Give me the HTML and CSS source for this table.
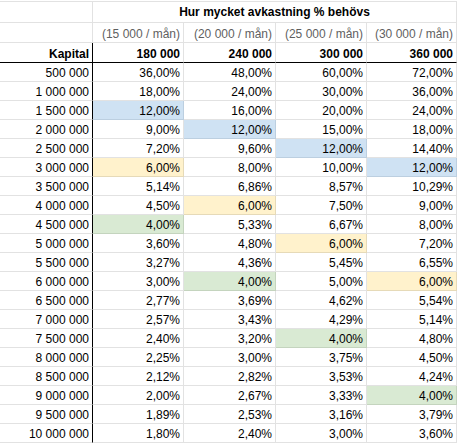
FILE: index.html
```html
<!DOCTYPE html>
<html lang="sv">
<head>
<meta charset="utf-8">
<link rel="stylesheet" href="styles.css">
</head>
<body>
<div class="sheet">
  <div class="c r1 key"></div>
  <div class="c r1 title">Hur mycket avkastning % behövs</div>

  <div class="c r2 key"></div>
  <div class="c r2 sub">(15 000 / mån)</div>
  <div class="c r2 sub">(20 000 / mån)</div>
  <div class="c r2 sub">(25 000 / mån)</div>
  <div class="c r2 sub">(30 000 / mån)</div>

  <div class="c r3 key bold">Kapital</div>
  <div class="c r3 bold">180 000</div>
  <div class="c r3 bold">240 000</div>
  <div class="c r3 bold">300 000</div>
  <div class="c r3 bold">360 000</div>

  <div class="c key">500 000</div><div class="c">36,00%</div><div class="c">48,00%</div><div class="c">60,00%</div><div class="c">72,00%</div>
  <div class="c key">1 000 000</div><div class="c">18,00%</div><div class="c">24,00%</div><div class="c">30,00%</div><div class="c">36,00%</div>
  <div class="c key">1 500 000</div><div class="c blue">12,00%</div><div class="c">16,00%</div><div class="c">20,00%</div><div class="c">24,00%</div>
  <div class="c key">2 000 000</div><div class="c">9,00%</div><div class="c blue">12,00%</div><div class="c">15,00%</div><div class="c">18,00%</div>
  <div class="c key">2 500 000</div><div class="c">7,20%</div><div class="c">9,60%</div><div class="c blue">12,00%</div><div class="c">14,40%</div>
  <div class="c key">3 000 000</div><div class="c yellow">6,00%</div><div class="c">8,00%</div><div class="c">10,00%</div><div class="c blue">12,00%</div>
  <div class="c key">3 500 000</div><div class="c">5,14%</div><div class="c">6,86%</div><div class="c">8,57%</div><div class="c">10,29%</div>
  <div class="c key">4 000 000</div><div class="c">4,50%</div><div class="c yellow">6,00%</div><div class="c">7,50%</div><div class="c">9,00%</div>
  <div class="c key">4 500 000</div><div class="c green">4,00%</div><div class="c">5,33%</div><div class="c">6,67%</div><div class="c">8,00%</div>
  <div class="c key">5 000 000</div><div class="c">3,60%</div><div class="c">4,80%</div><div class="c yellow">6,00%</div><div class="c">7,20%</div>
  <div class="c key">5 500 000</div><div class="c">3,27%</div><div class="c">4,36%</div><div class="c">5,45%</div><div class="c">6,55%</div>
  <div class="c key">6 000 000</div><div class="c">3,00%</div><div class="c green">4,00%</div><div class="c">5,00%</div><div class="c yellow">6,00%</div>
  <div class="c key">6 500 000</div><div class="c">2,77%</div><div class="c">3,69%</div><div class="c">4,62%</div><div class="c">5,54%</div>
  <div class="c key">7 000 000</div><div class="c">2,57%</div><div class="c">3,43%</div><div class="c">4,29%</div><div class="c">5,14%</div>
  <div class="c key">7 500 000</div><div class="c">2,40%</div><div class="c">3,20%</div><div class="c green">4,00%</div><div class="c">4,80%</div>
  <div class="c key">8 000 000</div><div class="c">2,25%</div><div class="c">3,00%</div><div class="c">3,75%</div><div class="c">4,50%</div>
  <div class="c key">8 500 000</div><div class="c">2,12%</div><div class="c">2,82%</div><div class="c">3,53%</div><div class="c">4,24%</div>
  <div class="c key">9 000 000</div><div class="c">2,00%</div><div class="c">2,67%</div><div class="c">3,33%</div><div class="c green">4,00%</div>
  <div class="c key">9 500 000</div><div class="c">1,89%</div><div class="c">2,53%</div><div class="c">3,16%</div><div class="c">3,79%</div>
  <div class="c key">10 000 000</div><div class="c">1,80%</div><div class="c">2,40%</div><div class="c">3,00%</div><div class="c">3,60%</div>
</div>
</body>
</html>
```
FILE: styles.css
```css
html, body {
  margin: 0;
  padding: 0;
  background: #fff;
}

.sheet {
  margin-top: 1px;
  display: grid;
  grid-template-columns: 93px 91px 92px 91px 90px;
  grid-template-rows: 22px 20px 20px repeat(20, 19px);
  font-family: "Liberation Sans", Arial, sans-serif;
  font-size: 12px;
  color: #000;
}

.c {
  box-sizing: border-box;
  border-right: 1px solid #e2e2e2;
  border-bottom: 1px solid #e2e2e2;
  display: flex;
  align-items: flex-end;
  justify-content: flex-end;
  padding: 0 3px 1px 0;
  line-height: 14px;
  white-space: nowrap;
  overflow: hidden;
}

.r1 {
  border-top: 1px solid #e2e2e2;
  padding-bottom: 3px;
}

.title {
  grid-column: 2 / 6;
  justify-content: center;
  font-weight: bold;
  padding-right: 0;
}

.sub {
  color: #5f5f5f;
}

.bold {
  font-weight: bold;
}

.r3 {
  border-bottom-color: #000;
}

.key.r3,
.key:not(.r1):not(.r2) {
  border-right-color: #000;
}

.blue {
  background: #cfe2f3;
  border-right-color: #bccfe0;
  border-bottom-color: #bccfe0;
}

.yellow {
  background: #fff2cc;
  border-right-color: #e6dab8;
  border-bottom-color: #e6dab8;
}

.green {
  background: #d9ead3;
  border-right-color: #c4d4be;
  border-bottom-color: #c4d4be;
}
```
